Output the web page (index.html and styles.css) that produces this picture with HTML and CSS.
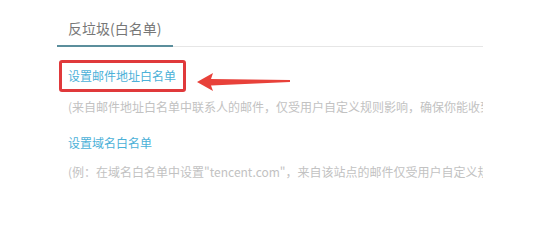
FILE: index.html
```html
<!DOCTYPE html>
<html lang="zh-CN">
<head>
<meta charset="utf-8">
<link rel="stylesheet" href="styles.css">
</head>
<body>
<div class="panel">
  <div class="tabs">
    <div class="tab">反垃圾(白名单)</div>
  </div>
  <div class="content">
    <a class="link link-first">设置邮件地址白名单</a>
    <p class="note">(来自邮件地址白名单中联系人的邮件，仅受用户自定义规则影响，确保你能收到这些联系人的邮件)</p>
    <a class="link link-second">设置域名白名单</a>
    <p class="note">(例：在域名白名单中设置"tencent.com"，来自该站点的邮件仅受用户自定义规则影响)</p>
  </div>
</div>
<div class="highlight"></div>
<svg class="arrow" width="100" height="24" viewBox="0 0 100 24">
  <polygon points="0,10 16,1 14,7 93,8 93,10 14,13.5 16,19" fill="#e8413a"/>
</svg>
</body>
</html>
```
FILE: styles.css
```css
html, body {
  margin: 0;
  padding: 0;
  background: #ffffff;
}
body {
  font-family: "Noto Sans CJK SC", "Microsoft YaHei", sans-serif;
  position: relative;
  width: 559px;
  height: 248px;
  overflow: hidden;
}
.panel {
  margin-left: 57px;
  width: 426px;
  overflow: hidden;
}
.tabs {
  display: flex;
  height: 46px;
  border-bottom: 1px solid #e6e6e6;
}
.tab {
  box-sizing: border-box;
  width: 116px;
  padding: 18px 0 0 11px;
  font-size: 14px;
  line-height: 20px;
  color: #777777;
  border-bottom: 2px solid #5b8e9c;
  margin-bottom: -1px;
  white-space: nowrap;
}
.content {
  padding-left: 11px;
  display: flex;
  flex-direction: column;
  align-items: flex-start;
}
.link {
  font-size: 12px;
  line-height: 16px;
  color: #4cb1d8;
  white-space: nowrap;
}
.link-first {
  margin-top: 21px;
}
.link-second {
  margin-top: 20px;
}
.note {
  margin: 15px 0 0 0;
  font-size: 12px;
  line-height: 16px;
  color: #c2c2c2;
  white-space: nowrap;
}
.link-second + .note {
  margin-top: 13px;
}
.highlight {
  position: absolute;
  left: 59px;
  top: 60px;
  width: 121px;
  height: 26px;
  border: 3px solid #e0393b;
  border-radius: 3px;
}
.arrow {
  position: absolute;
  left: 197px;
  top: 72px;
}
```
